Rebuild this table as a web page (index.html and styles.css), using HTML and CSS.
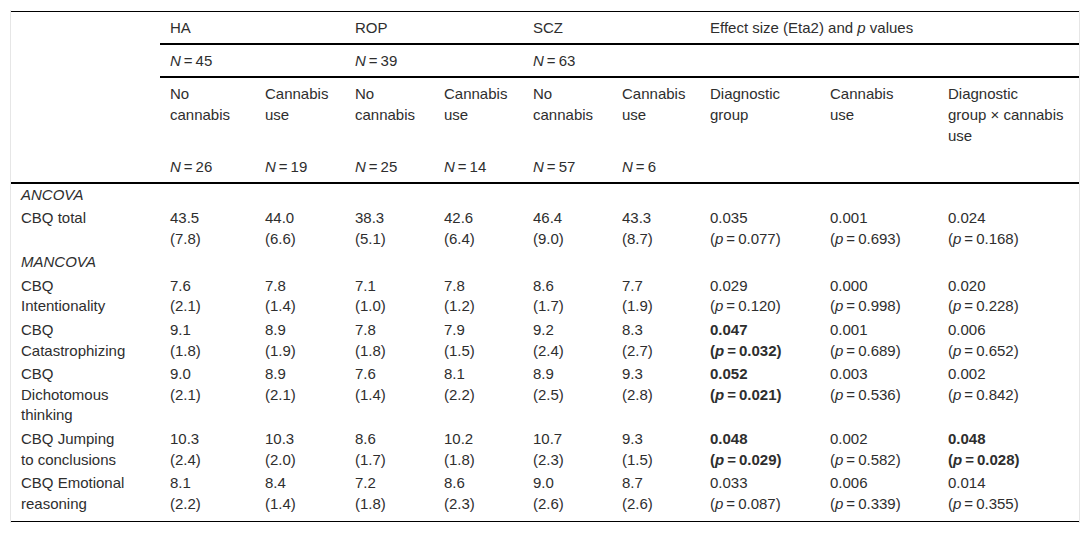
FILE: index.html
```html
<!DOCTYPE html>
<html lang="en">
<head>
<meta charset="utf-8">
<title>CBQ table</title>
<link rel="stylesheet" href="styles.css">
</head>
<body>
<div class="wrap">
<table class="tbl">
<colgroup>
<col class="c0"><col class="c1"><col class="c2"><col class="c3"><col class="c4"><col class="c5"><col class="c6"><col class="c7"><col class="c8"><col class="c9">
</colgroup>
<thead>
<tr class="h1">
<th rowspan="4" class="corner"></th>
<th colspan="2" class="rule">HA</th>
<th colspan="2" class="rule">ROP</th>
<th colspan="2" class="rule">SCZ</th>
<th colspan="3" class="rule">Effect size (Eta2) and <i>p</i> values</th>
</tr>
<tr class="h2">
<th colspan="2" class="rule"><i>N</i>&thinsp;=&thinsp;45</th>
<th colspan="2" class="rule"><i>N</i>&thinsp;=&thinsp;39</th>
<th colspan="2" class="rule"><i>N</i>&thinsp;=&thinsp;63</th>
<th colspan="3" class="rule"></th>
</tr>
<tr class="h3">
<th>No<br>cannabis</th>
<th>Cannabis<br>use</th>
<th>No<br>cannabis</th>
<th>Cannabis<br>use</th>
<th>No<br>cannabis</th>
<th>Cannabis<br>use</th>
<th>Diagnostic<br>group</th>
<th>Cannabis<br>use</th>
<th>Diagnostic<br>group × cannabis<br>use</th>
</tr>
<tr class="h4">
<th><i>N</i>&thinsp;=&thinsp;26</th>
<th><i>N</i>&thinsp;=&thinsp;19</th>
<th><i>N</i>&thinsp;=&thinsp;25</th>
<th><i>N</i>&thinsp;=&thinsp;14</th>
<th><i>N</i>&thinsp;=&thinsp;57</th>
<th><i>N</i>&thinsp;=&thinsp;6</th>
<th></th>
<th></th>
<th></th>
</tr>
</thead>
<tbody>
<tr>
<td><i>ANCOVA</i></td><td></td><td></td><td></td><td></td><td></td><td></td><td></td><td></td><td></td>
</tr>
<tr>
<td>CBQ total</td>
<td>43.5<br>(7.8)</td><td>44.0<br>(6.6)</td><td>38.3<br>(5.1)</td><td>42.6<br>(6.4)</td><td>46.4<br>(9.0)</td><td>43.3<br>(8.7)</td>
<td>0.035<br>(<i>p</i>&thinsp;=&thinsp;0.077)</td><td>0.001<br>(<i>p</i>&thinsp;=&thinsp;0.693)</td><td>0.024<br>(<i>p</i>&thinsp;=&thinsp;0.168)</td>
</tr>
<tr>
<td><i>MANCOVA</i></td><td></td><td></td><td></td><td></td><td></td><td></td><td></td><td></td><td></td>
</tr>
<tr>
<td>CBQ<br>Intentionality</td>
<td>7.6<br>(2.1)</td><td>7.8<br>(1.4)</td><td>7.1<br>(1.0)</td><td>7.8<br>(1.2)</td><td>8.6<br>(1.7)</td><td>7.7<br>(1.9)</td>
<td>0.029<br>(<i>p</i>&thinsp;=&thinsp;0.120)</td><td>0.000<br>(<i>p</i>&thinsp;=&thinsp;0.998)</td><td>0.020<br>(<i>p</i>&thinsp;=&thinsp;0.228)</td>
</tr>
<tr>
<td>CBQ<br>Catastrophizing</td>
<td>9.1<br>(1.8)</td><td>8.9<br>(1.9)</td><td>7.8<br>(1.8)</td><td>7.9<br>(1.5)</td><td>9.2<br>(2.4)</td><td>8.3<br>(2.7)</td>
<td><b>0.047<br>(<i>p</i>&thinsp;=&thinsp;0.032)</b></td><td>0.001<br>(<i>p</i>&thinsp;=&thinsp;0.689)</td><td>0.006<br>(<i>p</i>&thinsp;=&thinsp;0.652)</td>
</tr>
<tr>
<td>CBQ<br>Dichotomous<br>thinking</td>
<td>9.0<br>(2.1)</td><td>8.9<br>(2.1)</td><td>7.6<br>(1.4)</td><td>8.1<br>(2.2)</td><td>8.9<br>(2.5)</td><td>9.3<br>(2.8)</td>
<td><b>0.052<br>(<i>p</i>&thinsp;=&thinsp;0.021)</b></td><td>0.003<br>(<i>p</i>&thinsp;=&thinsp;0.536)</td><td>0.002<br>(<i>p</i>&thinsp;=&thinsp;0.842)</td>
</tr>
<tr>
<td>CBQ Jumping<br>to conclusions</td>
<td>10.3<br>(2.4)</td><td>10.3<br>(2.0)</td><td>8.6<br>(1.7)</td><td>10.2<br>(1.8)</td><td>10.7<br>(2.3)</td><td>9.3<br>(1.5)</td>
<td><b>0.048<br>(<i>p</i>&thinsp;=&thinsp;0.029)</b></td><td>0.002<br>(<i>p</i>&thinsp;=&thinsp;0.582)</td><td><b>0.048<br>(<i>p</i>&thinsp;=&thinsp;0.028)</b></td>
</tr>
<tr class="last">
<td>CBQ Emotional<br>reasoning</td>
<td>8.1<br>(2.2)</td><td>8.4<br>(1.4)</td><td>7.2<br>(1.8)</td><td>8.6<br>(2.3)</td><td>9.0<br>(2.6)</td><td>8.7<br>(2.6)</td>
<td>0.033<br>(<i>p</i>&thinsp;=&thinsp;0.087)</td><td>0.006<br>(<i>p</i>&thinsp;=&thinsp;0.339)</td><td>0.014<br>(<i>p</i>&thinsp;=&thinsp;0.355)</td>
</tr>
</tbody>
</table>
</div>
</body>
</html>
```

FILE: styles.css
```css
html, body {
  margin: 0;
  padding: 0;
  background: #ffffff;
}

body {
  font-family: "Liberation Sans", Arial, sans-serif;
  font-size: 15px;
  color: #2e2e2e;
}

.wrap {
  margin: 10px 10px 0 10px;
  padding: 1px 0 1px 0;
  border-left: 1px solid #e6e6e6;
  border-right: 1px solid #e6e6e6;
}

.tbl {
  width: 100%;
  border-collapse: collapse;
  table-layout: fixed;
  border-top: 1px solid #000;
  border-bottom: 1px solid #000;
}

.c0 { width: 149px; }
.c1 { width: 95px; }
.c2 { width: 90px; }
.c3 { width: 89px; }
.c4 { width: 89px; }
.c5 { width: 89px; }
.c6 { width: 88px; }
.c7 { width: 120px; }
.c8 { width: 118px; }
.c9 { width: 141px; }

.tbl th,
.tbl td {
  text-align: left;
  vertical-align: top;
  font-weight: normal;
  padding: 5px 6px 5px 10px;
  line-height: 21px;
  white-space: nowrap;
}

.tbl th.rule {
  border-bottom: 2px solid #000;
}

.tbl th.corner {
  border-bottom: 2px solid #000;
}

.tbl .h4 th {
  border-bottom: 2px solid #000;
}

.tbl td {
  padding-top: 1px;
  padding-bottom: 1.5px;
  line-height: 20.8px;
}

.tbl tr.last td {
  padding-bottom: 7px;
}

.tbl b {
  font-weight: bold;
}
```
